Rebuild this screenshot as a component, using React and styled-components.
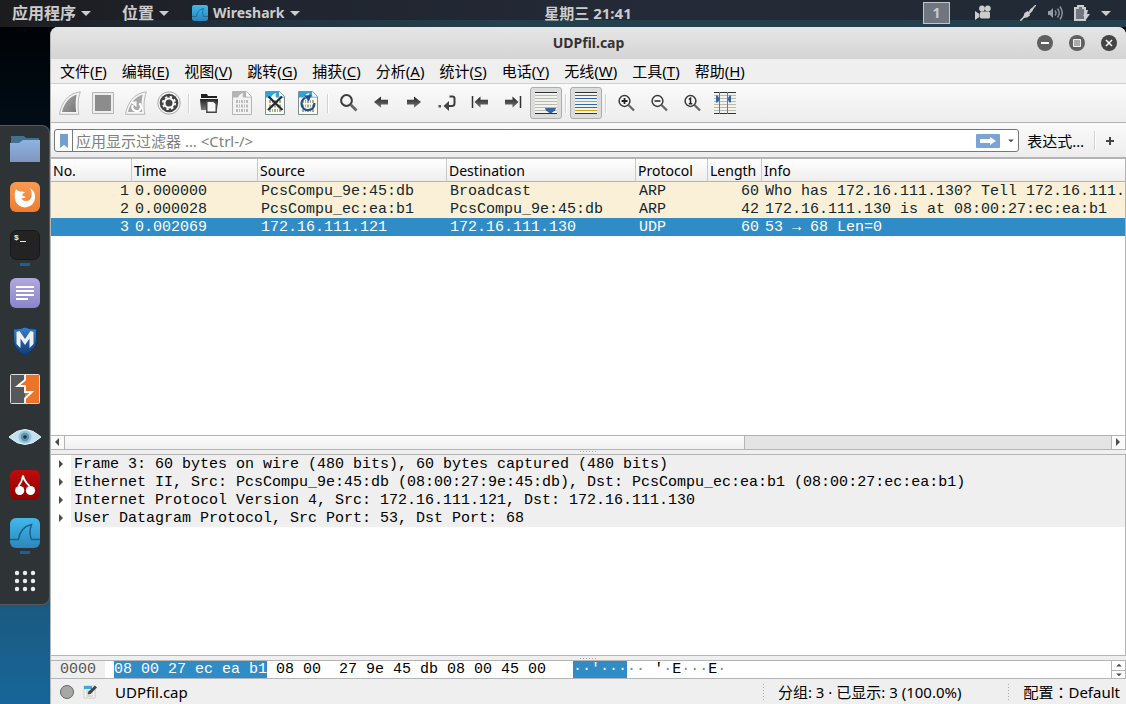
import React from 'react';
import styled, { createGlobalStyle } from 'styled-components';

const ui = '"Noto Sans", "Noto Sans CJK SC", sans-serif';
const mono = '"Liberation Mono", "Noto Sans CJK SC", monospace';
const line = '#b4b4b4';
const blue = '#308cc6';

const Global = createGlobalStyle`
  * { box-sizing: border-box; }
  html, body { margin: 0; height: 100%; }
  body { font: 14px/20px ${ui}; color: #000; overflow: hidden; }
  button { font: inherit; color: inherit; background: none; border: 0; padding: 0; }
  svg { display: block; flex: none; }
`;

const Desktop = styled.div`
  height: 100vh;
  display: flex;
  flex-direction: column;
  background: linear-gradient(#000 0, #010d17 18%, #0a3550 60%, #1a5b82 87%, #17669a 100%);
`;

/* ---------- top panel ---------- */
const Panel = styled.header`
  height: 27px;
  flex: none;
  display: grid;
  grid-template-columns: 50px minmax(0, 1fr) auto minmax(0, 1fr);
  align-items: center;
  padding-bottom: 1px;
  color: #ccc;
  font-weight: 700;
  background:
    linear-gradient(90deg, transparent, #24404c 45%, #24404c) bottom / 100% 7px no-repeat,
    linear-gradient(90deg, #1c1c1f, #20252f 25%, #242a37 60%, #222a35);
`;
const PanelMenus = styled.nav`
  grid-column: 1 / 3;
  display: flex;
  padding-left: 12px;
  gap: 23px;
`;
const PanelMenu = styled.button`
  display: flex;
  align-items: center;
  gap: 5px;
  padding-right: ${(p) => (p.$wide ? 8 : 0)}px !important;
  font-size: ${(p) => (p.$latin ? 14 : 16)}px !important;
`;
const Clock = styled.time`
  white-space: nowrap;
  font-size: 15px;
`;
const Tray = styled.div`
  display: flex;
  align-items: center;
  justify-content: flex-end;
  gap: 11px;
  padding-right: 15px;
`;
const Workspace = styled.button`
  width: 27px;
  height: 22px;
  border: 1px solid #c3c6ca !important;
  background: #707680 !important;
  margin-right: 14px;
`;
const TrayButton = styled.button`
  margin-right: ${(p) => (p.$gap ? 18 : 0)}px;
`;

const Main = styled.div`
  flex: 1;
  min-height: 0;
  display: flex;
`;

/* ---------- dock ---------- */
const Dock = styled.nav`
  width: 50px;
  flex: none;
  padding-top: 98px;
`;
const DockBody = styled.div`
  width: 50px;
  display: flex;
  flex-direction: column;
  border: 1px solid #55585a;
  border-left: 0;
  border-radius: 0 8px 8px 0;
  background: #2e3436;
`;
const DockButton = styled.button`
  height: 48px;
  display: flex;
  flex-direction: column;
  align-items: center;
  justify-content: flex-start;
  padding-top: 8px !important;
  &::after {
    content: '';
    width: 10px;
    height: 3px;
    margin-top: 3px;
    background: ${(p) => (p.$running ? '#215d9c' : 'transparent')};
  }
  &:last-child { height: 46px; }
`;

/* ---------- window ---------- */
const Window = styled.main`
  flex: 1;
  min-width: 0;
  display: flex;
  flex-direction: column;
  border-radius: 8px 8px 0 0;
  overflow: hidden;
  background: #efefef;
  border-left: 1px solid ${line};
`;
const TitleBar = styled.div`
  height: 32px;
  flex: none;
  display: grid;
  grid-template-columns: 1fr auto 1fr;
  align-items: center;
  background: linear-gradient(#e6e6e6, #d4d4d4);
`;
const Title = styled.h1`
  grid-column: 2;
  margin: 0;
  font-size: 14px;
  color: #333;
`;
const WindowButtons = styled.div`
  display: flex;
  justify-content: flex-end;
  gap: 16px;
  padding-right: 9px;
`;
const MenuBar = styled.nav`
  height: 25px;
  flex: none;
  display: flex;
  gap: 1px;
  padding: 0 2px;
  border-bottom: 1px solid #d0d0d0;
`;
const MenuItem = styled.button`
  padding: 0 7px !important;
  font-size: 15px !important;
  white-space: nowrap;
  u { text-underline-offset: 2px; }
`;
const ToolBar = styled.div`
  height: 39px;
  flex: none;
  display: flex;
  align-items: center;
  gap: 1px;
  padding-left: 3px;
  border-bottom: 1px solid ${line};
  background: linear-gradient(#fafafa, #ededed);
`;
const ToolButton = styled.button`
  width: 32px;
  height: 32px;
  display: grid;
  place-items: center;
  border-radius: 3px;
  border: 1px solid ${(p) => (p.$on ? '#adadad' : 'transparent')} !important;
  background: ${(p) => (p.$on ? '#dcdcdc' : 'transparent')} !important;
`;
const Separator = styled.span`
  width: 6px;
  height: 19px;
  background: linear-gradient(90deg, transparent 2px, #d2d2d2 2px, #d2d2d2 3px, #fff 3px, #fff 4px, transparent 4px);
`;
const FilterBar = styled.form`
  height: 36px;
  flex: none;
  display: flex;
  align-items: center;
  padding: 1px 11px 0 3px;
  border-bottom: 2px solid ${line};
  background: linear-gradient(#fafafa, #ededed);
`;
const FilterBox = styled.div`
  flex: 1;
  height: 23px;
  display: flex;
  align-items: center;
  padding-right: 4px;
  border: 1px solid #777;
  border-radius: 3px;
  background: #fff;
`;
const Bookmark = styled.button`
  width: 18px;
  height: 21px;
  display: grid;
  place-items: center;
  border-right: 1px solid #777 !important;
`;
const FilterInput = styled.input`
  flex: 1;
  min-width: 0;
  height: 21px;
  border: 0;
  padding: 1px 3px 0;
  outline: 0;
  background: none;
  font: 15px/20px ${ui};
  &::placeholder { color: #808080; opacity: 1; }
`;
const Apply = styled.button`
  margin-right: 8px;
`;
const Expression = styled.button`
  margin: 0 8px;
  font-size: 15px !important;
`;
const Plus = styled.button`
  margin-left: 7px;
`;

/* ---------- packet list ---------- */
const PacketPane = styled.section`
  flex: 292 1 0;
  min-height: 0;
  display: flex;
  flex-direction: column;
  border-right: 1px solid ${line};
  border-bottom: 1px solid ${line};
  background: #fff;
`;
const PacketScroll = styled.div`
  flex: 1;
  min-height: 0;
  overflow: hidden;
`;
const PacketTable = styled.table`
  width: 100%;
  table-layout: fixed;
  border-collapse: separate;
  border-spacing: 0;
`;
const Col = styled.col`
  width: ${(p) => (p.$w ? `${p.$w}px` : 'auto')};
`;
const HeadCell = styled.th`
  height: 23px;
  padding: 2px 2px 0;
  font: 14px/20px ${ui};
  text-align: left;
  border-bottom: 1px solid ${line};
  border-right: 1px solid #c9c9c9;
  background: linear-gradient(#fff, #eee);
  &:last-child { border-right: 0; }
`;
const PacketRow = styled.tr`
  color: ${(p) => (p.$selected ? '#fff' : '#12272e')};
  background: ${(p) => (p.$selected ? blue : '#faf0d7')};
`;
const Cell = styled.td`
  height: 18px;
  padding: 1px 3px 0;
  font: 15px/17px ${mono};
  text-align: ${(p) => (p.$right ? 'right' : 'left')};
  white-space: nowrap;
  overflow: hidden;
`;
const ScrollBar = styled.div`
  height: 14px;
  flex: none;
  display: flex;
  border-top: 1px solid ${line};
  background: #e4e4e4;
`;
const ScrollArrow = styled.button`
  width: 14px;
  display: grid;
  place-items: center;
  background: #fafafa !important;
  border-left: ${(p) => (p.$end ? `1px solid ${line}` : '0')} !important;
  border-right: ${(p) => (p.$end ? '0' : `1px solid ${line}`)} !important;
`;
const Track = styled.div`
  flex: 1;
`;
const Thumb = styled.div`
  width: 65%;
  height: 100%;
  border-right: 1px solid ${line};
  background: linear-gradient(#fcfcfc, #f0f0f0);
`;
const Splitter = styled.div`
  height: 4px;
  flex: none;
  display: grid;
  place-items: center;
  &::after {
    content: '';
    width: 17px;
    height: 1px;
    background: repeating-linear-gradient(90deg, #aaa 0 1px, transparent 1px 3px);
  }
`;

/* ---------- details ---------- */
const DetailPane = styled.section`
  flex: 202 1 0;
  min-height: 0;
  overflow: hidden;
  border: 1px solid ${line};
  border-left: 0;
  background: #fff;
`;
const Tree = styled.ul`
  margin: 0;
  padding: 0;
  list-style: none;
`;
const TreeItem = styled.li`
  height: 18px;
  display: flex;
`;
const Expander = styled.button`
  width: 20px;
  display: grid;
  place-items: center;
`;
const TreeText = styled.span`
  flex: 1;
  padding: 1px 0 0 3px;
  font: 15px/17px ${mono};
  white-space: pre;
  background: #efefef;
`;

/* ---------- bytes ---------- */
const BytesPane = styled.section`
  height: 19px;
  flex: none;
  display: flex;
  border: 1px solid ${line};
  border-left: 0;
  background: #fff;
  font: 15px/18px ${mono};
  white-space: pre;
`;
const Offset = styled.span`
  width: 54px;
  padding-left: 9px;
  margin-right: 9px;
  color: #555;
  background: #efefef;
`;
const Bytes = styled.span`
  flex: 1;
  overflow: hidden;
`;
const Hit = styled.mark`
  display: inline-block;
  color: #fff;
  background: ${blue};
`;
const Faint = styled.span`
  color: #888;
`;
const Spin = styled.div`
  width: 14px;
  display: grid;
  grid-template-rows: 1fr 1fr;
  border-left: 1px solid ${line};
`;
const SpinButton = styled.button`
  display: grid;
  place-items: center;
  & + & { border-top: 1px solid ${line}; }
`;

/* ---------- status ---------- */
const StatusBar = styled.footer`
  height: 25px;
  flex: none;
  display: flex;
  align-items: center;
  padding: 1px 6px 0 9px;
  font-size: 15px;
  white-space: nowrap;
`;
const StatusButton = styled.button`
  margin-right: 9px;
`;
const FileName = styled.span`
  flex: 1;
  margin-left: 9px;
`;
const Grip = styled.span`
  width: 1px;
  height: 17px;
  margin-right: 14px;
  background: repeating-linear-gradient(#aaa 0 1px, transparent 1px 3px);
`;
const Counts = styled.span`
  margin-right: 47px;
`;
const Profile = styled.button`
  font: 15px/20px "Noto Sans", "Noto Sans CJK TC", sans-serif !important;
`;

/* ---------- drawings ---------- */
const Caret = () => (
  <svg width="10" height="5" viewBox="0 0 10 5"><path d="M0 0h10L5 5z" fill="#ccc" /></svg>
);
const Wire = ({ size }) => (
  <svg width={size} height={size} viewBox="0 0 30 30">
    <defs><linearGradient id={`w${size}`} x2="0" y2="1"><stop stopColor="#42b8ea" /><stop offset="1" stopColor="#2c86bd" /></linearGradient></defs>
    <rect width="30" height="30" rx={size > 20 ? 6 : 4} fill={`url(#w${size})`} />
    <path d="M0 21.500h8.500C9.500 14 13 8.500 21.500 6.500C19.500 12 19.500 17 21.500 21.500H30" fill="none" stroke="#176486" strokeWidth="1.500" />
  </svg>
);
const finPath = 'M1.500 23.300C3.500 12 9.500 2.500 22.300.8C19.800 8 19.500 16 20.800 23.300Z';
const finInner = 'M4 21C6 13 10.500 6 18.700 3.500C17.500 9 17.300 15 18.200 21Z';
const Fin = () => (
  <svg width="24" height="24" viewBox="0 0 24 24">
    <defs><linearGradient id="fin" x2="1" y2="1"><stop stopColor="#aaa" /><stop offset="1" stopColor="#777" /></linearGradient></defs>
    <path d={finPath} fill="#f6f6f6" stroke="#b5b5b5" />
    <path d={finInner} fill="url(#fin)" />
  </svg>
);
const Stop = () => (
  <svg width="24" height="24" viewBox="0 0 24 24">
    <path d="M1.500 1.500h21v21h-21z" fill="#eee" stroke="#b5b5b5" />
    <path d="M4 4h16v16H4z" fill="#8c8c8c" />
  </svg>
);
const Restart = () => (
  <svg width="24" height="24" viewBox="0 0 24 24">
    <path d={finPath} fill="#f6f6f6" stroke="#b5b5b5" />
    <path d={finInner} fill="#a8a8a8" />
    <path d="M15.300 12.500A4.300 4.300 0 1 1 8.800 14" fill="none" stroke="#fff" strokeWidth="2.300" />
    <path d="M6.500 11l6-.8v6z" fill="#fff" />
  </svg>
);
const Gear = () => (
  <svg width="24" height="24" viewBox="0 0 24 24">
    <circle cx="12" cy="12" r="11.200" fill="#f4f4f4" stroke="#a8a8a8" />
    <circle cx="12" cy="12" r="9.300" fill="#424242" />
    <circle cx="12" cy="12" r="6.200" fill="none" stroke="#fff" strokeWidth="1.700" strokeDasharray="2.435 2.435" />
    <circle cx="12" cy="12" r="4.500" fill="none" stroke="#fff" strokeWidth="2" />
  </svg>
);
const Open = () => (
  <svg width="24" height="24" viewBox="0 0 24 24">
    <defs><linearGradient id="op" x2="0" y2="1"><stop stopColor="#222" /><stop offset="1" stopColor="#777" /></linearGradient></defs>
    <path d="M4 3h6l1 2h9v2H4z" fill="#1f1f1f" />
    <path d="M3 8h18v4l-1 7H4z" fill="url(#op)" />
    <path d="M9.800 10.200h6.700l2.700 2.500v8.500H9.800z" fill="#f6f6f6" stroke="#444" strokeWidth="1.400" />
  </svg>
);
const Doc = ({ kind }) => {
  const off = kind === 'save';
  const head = off ? '#b4b4b4' : '#2ea3dc';
  return (
    <svg width="24" height="24" viewBox="0 0 24 24">
      <path d="M2.500.5h14l5 5v18h-19z" fill={off ? '#f3f3f3' : '#fcfceb'} stroke={off ? '#b4b4b4' : '#7c8c92'} />
      <path d="M3 1h13.200v4.600H21v.9h-8C12.500 4.500 12.500 3 13.500 2C10.500 2.500 9 4 8 6.500H3z" fill={head} />
      <path d="M16.500 1v4.500H21z" fill="#fff" />
      <path d="M6 10.500h12M6 15h12M6 19.500h12" stroke={off ? '#bbb' : '#a8a89a'} strokeWidth="3" strokeDasharray="2 1 1 1" />
      {kind === 'close' && <path d="M5.500 5.500l14 13.500M19 5.500L5 19" stroke="#202a30" strokeWidth="2.200" />}
      {kind === 'reload' && (
        <g>
          <path d="M9.500 6.800A6.400 6.400 0 1 0 18.300 12" fill="none" stroke="#204f94" strokeWidth="2.300" />
          <path d="M8 4.500L15.500 4L12.800 10.500z" fill="#204f94" />
        </g>
      )}
    </svg>
  );
};
const Lens = ({ mark, find }) => (
  <svg width="24" height="24" viewBox="0 0 24 24">
    <circle cx="10.500" cy={find ? 9.500 : 10} r="5.400" fill={find ? 'none' : '#f7f7f7'} stroke="#3b3b3b" strokeWidth={find ? 2 : 1.500} />
    <path d={find ? 'M14.500 13.500l6 6' : 'M14.500 14l5.500 5.500'} stroke="#666" strokeWidth={find ? 2.800 : 2.300} />
    {mark === 'in' && <path d="M7.500 10h6M10.500 7v6" stroke="#222" strokeWidth="1.800" />}
    {mark === 'out' && <path d="M7.500 10h6" stroke="#222" strokeWidth="1.500" />}
    {mark === 'one' && <path d="M8.800 8.500l1.700-1.200v5.200M8.800 12.700h3.500" fill="none" stroke="#222" strokeWidth="1.500" />}
  </svg>
);
const Arrow = ({ dir, bar }) => (
  <svg width="24" height="24" viewBox="0 0 24 24">
    <defs><linearGradient id="ar" x2="0" y2="1"><stop stopColor="#222" /><stop offset="1" stopColor="#777" /></linearGradient></defs>
    <g transform={dir === 'right' ? 'translate(24 0) scale(-1 1)' : undefined}>
      <path d={bar ? 'M6.500 11l6-5.500v3.300H20v4.600h-7.500v3.300z' : 'M5 11l7-5.500v3.300h7v4.600h-7v3.300z'} fill="url(#ar)" />
      {bar && <path d="M4.500 5v12" stroke="#333" strokeWidth="1.500" />}
    </g>
  </svg>
);
const Jump = () => (
  <svg width="24" height="24" viewBox="0 0 24 24">
    <path d="M14.500 5.500h3q2 0 2 2v5q0 2.500-3 2.500h-4" fill="none" stroke="#3d3d3d" strokeWidth="2" />
    <path d="M8.500 15l5.500-5v10z" fill="#444" />
    <path d="M3.500 14h2.500v2.500H3.500z" fill="#555" />
  </svg>
);
const Lines = ({ kind }) => {
  const colors = kind === 'color'
    ? ['#ef2929', '#3465a4', '#73d216', '#3465a4', '#75507b', '#d0a010']
    : ['#b8bab0', '#b8bab0', '#b8bab0', '#b8bab0', '#b8bab0', '#b8bab0'];
  return (
    <svg width="24" height="24" viewBox="0 0 24 24" shapeRendering="crispEdges">
      <path d="M1 1h22v22H1z" fill="#f2f2ee" />
      {colors.map((c, i) => <rect key={c + i} x="1" y={4 + i * 3} width="22" height="1" fill={c} />)}
      <path d="M1 1h22v1H1zM1 22h22v1H1z" fill="#2e3436" />
      {kind === 'scroll' && <path d="M11 17h11l-1 2.500L17.500 22h-2L12 19.500z" fill="#3465a4" shapeRendering="auto" />}
      {kind === 'columns' && (
        <g shapeRendering="auto">
          <path d="M6.500 1v22M14.500 1v22" stroke="#777" />
          <path d="M3 4.500h1.500L7 8l-2.500 3.500H3zM18 4.500h-1.500L14.500 8l2 3.500H18z" fill="#3465a4" />
        </g>
      )}
    </svg>
  );
};
const Tri = ({ dir }) => {
  const d = { left: 'M5 0v8L1 4z', right: 'M1 0v8l4-4z', up: 'M0 5l4-4 4 4z', down: 'M0 2l4 4 4-4z' }[dir];
  const small = dir === 'up' || dir === 'down';
  return <svg width={small ? 6 : 7} height={small ? 5 : 8} viewBox={small ? '0 0 8 7' : '0 0 7 8'}><path d={d} fill="#4c4c4c" /></svg>;
};
const winMarks = {
  min: <path d="M4 8h8" stroke="#fff" strokeWidth="2" />,
  max: <path d="M4.500 4.500h7v7h-7z" fill="#aaa" stroke="#eee" />,
  close: <path d="M5 5l6 6M11 5l-6 6" stroke="#fff" strokeWidth="1.500" />,
};
const WinIcon = ({ kind }) => (
  <svg width="16" height="16" viewBox="0 0 16 16">
    <circle cx="8" cy="8" r="8" fill={kind === 'close' ? '#454545' : '#606060'} />
    {winMarks[kind]}
  </svg>
);
const trayArt = {
  camera: <g fill="#ccc"><circle cx="7" cy="3.500" r="2.900" /><circle cx="12.800" cy="3.500" r="2.900" /><rect x="5" y="6.500" width="10" height="7" rx="1.500" /><path d="M0 6l4.500 3v3L0 15z" /></g>,
  pen: <g><path d="M0 16l5-5M10 6l6-6" stroke="#ccc" strokeWidth="1.500" /><path d="M3 13l1.500-5 3-2 1 1L11 3.500l3-1-1.500 3.500L9.500 9l.5 1.500-3 2z" fill="#ccc" /></g>,
  sound: <g stroke="#888e96" fill="none" strokeWidth="1.500"><path d="M1 6h2l3-3v10l-3-3H1z" fill="#999da4" stroke="none" /><path d="M8 5.500q2 2.500 0 5M10.500 3.500q3.500 4.500 0 9M13 1.500q4.500 6.500 0 13" /></g>,
  battery: <g><path d="M1 3h3V1h5v2h2v12H1z" fill="#717780" stroke="#ccc" strokeWidth="2" /><path d="M12 5l-3 6h3l-1 5 5-7h-3l1-4z" fill="#ccc" /></g>,
};
const TrayIcon = ({ kind }) => <svg width="16" height="16" viewBox="0 0 16 16">{trayArt[kind]}</svg>;

const dockArt = {
  files: (
    <g>
      <path d="M1 2h13l2 2h13v8H1z" fill="#41718f" />
      <path d="M0 9h9l4-3h17v22H0z" fill="url(#fl)" />
    </g>
  ),
  firefox: (
    <g>
      <rect width="30" height="30" rx="6" fill="url(#ff)" />
      <path d="M6 7C4.500 10 4.500 14 5 16.500A10 9.500 0 0 0 25 15.500C25.300 11 23.500 8 19.500 6C21.500 8.500 22 10.500 21.500 12.500C22 15 20.500 18.500 16.500 19C13.500 19.400 11.500 17.500 11.500 16C13 16.700 15 16 15.800 15C14 14.500 13 13.500 12 13C12.500 11.500 14 11 15 10.500C13.500 9.500 11.500 9.300 10.500 9.500C9 9 7.500 9 6 7z" fill="#fff" />
    </g>
  ),
  terminal: (
    <g>
      <rect x=".5" y=".5" width="29" height="29" rx="6" fill="#232323" stroke="#171717" />
      <text x="4" y="10" fill="#eee" fontFamily="Liberation Mono, monospace" fontWeight="700" fontSize="8">$</text>
      <path d="M10 11.500h6" stroke="#eee" />
    </g>
  ),
  notes: (
    <g>
      <rect width="30" height="30" rx="6" fill="url(#nt)" />
      <path d="M6 9h18M6 13h18M6 17h18M6 21h12" stroke="#fff" strokeWidth="2" />
    </g>
  ),
  metasploit: (
    <g>
      <path d="M15 1Q20 3.500 26.500 3V15Q25.500 24 15 29.500Q4.500 24 3.500 15V3Q10 3.500 15 1z" fill="url(#ms)" stroke="#0d3765" />
      <path d="M6.500 18V6l3-1 5.500 8 5.500-8 3 1v12l-4 4V12.500L15 19l-4.500-6.500V22z" fill="#edf1f6" />
    </g>
  ),
  burp: (
    <g>
      <path d="M1 1h28v28H1z" fill="#ed7328" />
      <path d="M1 1h14v5L7.500 12H15v17H1z" fill="#57585a" />
      <path d="M15 12v6h7l-7 6.500z" fill="#ed7328" />
      <path d="M15 1v5L7.500 12H15v6h7l-7 6.500V29" fill="none" stroke="#fff" strokeWidth="1.800" />
      <rect x=".5" y=".5" width="29" height="29" rx="1" fill="none" stroke="#ddd" />
    </g>
  ),
  eye: (
    <g>
      <path d="M-1 15Q15 0 31 15Q15 30 -1 15z" fill="#c3e2ee" stroke="#e4f3f8" />
      <circle cx="15" cy="15" r="6.500" fill="#93c4da" />
      <circle cx="15" cy="15" r="4.200" fill="#5f93ab" />
      <circle cx="15" cy="15" r="1.800" fill="#234" />
    </g>
  ),
  cherry: (
    <g>
      <rect width="30" height="30" rx="6" fill="url(#ch)" />
      <circle cx="9.700" cy="20.500" r="4.600" fill="#fff" /><circle cx="20.500" cy="20.500" r="4.600" fill="#fff" />
      <path d="M8.500 16Q12.500 11 13 5.500Q14 11 19.500 16" fill="none" stroke="#fff" strokeWidth="1.800" />
    </g>
  ),
  apps: (
    <g fill="#eee">
      {[7, 15, 23].map((y) => [7, 15, 23].map((x) => <circle key={`${x}-${y}`} cx={x} cy={y} r="2.200" />))}
    </g>
  ),
};
const DockIcon = ({ kind }) => (kind === 'wireshark' ? <Wire size={30} /> : (
  <svg width="30" height="30" viewBox="0 0 30 30" overflow="visible">
    <defs>
      <linearGradient id="fl" x2="0" y2="1"><stop stopColor="#8db4e0" /><stop offset="1" stopColor="#8095bf" /></linearGradient>
      <linearGradient id="ff" x2="0" y2="1"><stop stopColor="#f99b52" /><stop offset="1" stopColor="#f07b2e" /></linearGradient>
      <linearGradient id="nt" x2="0" y2="1"><stop stopColor="#b0a8e0" /><stop offset="1" stopColor="#8b84cc" /></linearGradient>
      <linearGradient id="ms" x2="0" y2="1"><stop stopColor="#3a80c4" /><stop offset="1" stopColor="#0d3c78" /></linearGradient>
      <linearGradient id="ch" x2="0" y2="1"><stop stopColor="#c00b0b" /><stop offset="1" stopColor="#8c0404" /></linearGradient>
    </defs>
    {dockArt[kind]}
  </svg>
));

/* ---------- data ---------- */
const dock = ['files', 'firefox', 'terminal', 'notes', 'metasploit', 'burp', 'eye', 'cherry', 'wireshark', 'apps'];
const running = ['terminal', 'wireshark'];
const menus = [['文件', 'F'], ['编辑', 'E'], ['视图', 'V'], ['跳转', 'G'], ['捕获', 'C'], ['分析', 'A'], ['统计', 'S'], ['电话', 'Y'], ['无线', 'W'], ['工具', 'T'], ['帮助', 'H']];
const tools = [
  ['Start', <Fin />], ['Stop', <Stop />], ['Restart', <Restart />], ['Options', <Gear />], null,
  ['Open', <Open />], ['Save', <Doc kind="save" />], ['Close', <Doc kind="close" />], ['Reload', <Doc kind="reload" />], null,
  ['Find', <Lens find />], ['Back', <Arrow dir="left" />], ['Forward', <Arrow dir="right" />], ['Go to', <Jump />],
  ['First', <Arrow dir="left" bar />], ['Last', <Arrow dir="right" bar />], ['Auto scroll', <Lines kind="scroll" />, true], null,
  ['Colorize', <Lines kind="color" />, true], null,
  ['Zoom in', <Lens mark="in" />], ['Zoom out', <Lens mark="out" />], ['Normal size', <Lens mark="one" />], ['Resize columns', <Lines kind="columns" />],
];
const columns = [['No.', 81], ['Time', 126], ['Source', 189], ['Destination', 189], ['Protocol', 72], ['Length', 54], ['Info', 0]];
const packets = [
  ['1', '0.000000', 'PcsCompu_9e:45:db', 'Broadcast', 'ARP', '60', 'Who has 172.16.111.130? Tell 172.16.111.121'],
  ['2', '0.000028', 'PcsCompu_ec:ea:b1', 'PcsCompu_9e:45:db', 'ARP', '42', '172.16.111.130 is at 08:00:27:ec:ea:b1'],
  ['3', '0.002069', '172.16.111.121', '172.16.111.130', 'UDP', '60', '53 → 68 Len=0'],
];
const details = [
  'Frame 3: 60 bytes on wire (480 bits), 60 bytes captured (480 bits)',
  'Ethernet II, Src: PcsCompu_9e:45:db (08:00:27:9e:45:db), Dst: PcsCompu_ec:ea:b1 (08:00:27:ec:ea:b1)',
  'Internet Protocol Version 4, Src: 172.16.111.121, Dst: 172.16.111.130',
  'User Datagram Protocol, Src Port: 53, Dst Port: 68',
];

export default function App() {
  return (
    <Desktop>
      <Global />
      <Panel>
        <PanelMenus>
          <PanelMenu $wide>应用程序<Caret /></PanelMenu>
          <PanelMenu>位置<Caret /></PanelMenu>
          <PanelMenu $latin><Wire size={16} />Wireshark<Caret /></PanelMenu>
        </PanelMenus>
        <Clock>星期三 21:41</Clock>
        <Tray>
          <Workspace>1</Workspace>
          <TrayButton $gap aria-label="Record"><TrayIcon kind="camera" /></TrayButton>
          <TrayButton aria-label="Input"><TrayIcon kind="pen" /></TrayButton>
          <TrayButton aria-label="Sound"><TrayIcon kind="sound" /></TrayButton>
          <TrayButton aria-label="Power"><TrayIcon kind="battery" /></TrayButton>
          <TrayButton aria-label="System menu"><Caret /></TrayButton>
        </Tray>
      </Panel>
      <Main>
        <Dock>
          <DockBody>
            {dock.map((k) => <DockButton key={k} aria-label={k} $running={running.includes(k)}><DockIcon kind={k} /></DockButton>)}
          </DockBody>
        </Dock>
        <Window>
          <TitleBar>
            <Title>UDPfil.cap</Title>
            <WindowButtons>
              {['min', 'max', 'close'].map((k) => <button key={k} aria-label={k}><WinIcon kind={k} /></button>)}
            </WindowButtons>
          </TitleBar>
          <MenuBar>
            {menus.map(([t, k]) => <MenuItem key={k}>{t}(<u>{k}</u>)</MenuItem>)}
          </MenuBar>
          <ToolBar>
            {tools.map((t, i) => (t ? <ToolButton key={i} aria-label={t[0]} $on={t[2]}>{t[1]}</ToolButton> : <Separator key={i} />))}
          </ToolBar>
          <FilterBar onSubmit={(e) => e.preventDefault()}>
            <FilterBox>
              <Bookmark type="button" aria-label="Bookmarks">
                <svg width="8" height="14" viewBox="0 0 8 14"><path d="M0 0h8v14l-4-3-4 3z" fill="#729fcf" /></svg>
              </Bookmark>
              <FilterInput aria-label="Display filter" placeholder="应用显示过滤器 … <Ctrl-/>" />
              <Apply aria-label="Apply">
                <svg width="24" height="14" viewBox="0 0 24 14"><rect width="24" height="14" rx="1" fill="#7ba3d3" /><path d="M4 5h10V3l6 4-6 4V9H4z" fill="#fff" /></svg>
              </Apply>
              <button type="button" aria-label="History"><Tri dir="down" /></button>
            </FilterBox>
            <Expression type="button">表达式…</Expression>
            <Separator />
            <Plus type="button" aria-label="Add filter">
              <svg width="10" height="10" viewBox="0 0 10 10"><path d="M1 5h8M5 1v8" stroke="#444" strokeWidth="2" /></svg>
            </Plus>
          </FilterBar>
          <PacketPane>
            <PacketScroll>
              <PacketTable>
                <colgroup>{columns.map(([n, w]) => <Col key={n} $w={w} />)}</colgroup>
                <thead><tr>{columns.map(([n]) => <HeadCell key={n}>{n}</HeadCell>)}</tr></thead>
                <tbody>
                  {packets.map((p, r) => (
                    <PacketRow key={r} $selected={r === 2}>
                      {p.map((c, i) => <Cell key={i} $right={i === 0 || i === 5}>{c}</Cell>)}
                    </PacketRow>
                  ))}
                </tbody>
              </PacketTable>
            </PacketScroll>
            <ScrollBar>
              <ScrollArrow aria-label="Scroll left"><Tri dir="left" /></ScrollArrow>
              <Track><Thumb /></Track>
              <ScrollArrow $end aria-label="Scroll right"><Tri dir="right" /></ScrollArrow>
            </ScrollBar>
          </PacketPane>
          <Splitter />
          <DetailPane>
            <Tree>
              {details.map((d) => (
                <TreeItem key={d}>
                  <Expander aria-label="Expand"><Tri dir="right" /></Expander>
                  <TreeText>{d}</TreeText>
                </TreeItem>
              ))}
            </Tree>
          </DetailPane>
          <Splitter />
          <BytesPane>
            <Offset>0000</Offset>
            <Bytes>
              <Hit>08 00 27 ec ea b1</Hit>{' 08 00  27 9e 45 db 08 00 45 00   '}<Hit>··'···</Hit>
              <Faint>··</Faint>{" '"}<Faint>·</Faint>E<Faint>···</Faint>E<Faint>·</Faint>
            </Bytes>
            <Spin>
              <SpinButton aria-label="Up"><Tri dir="up" /></SpinButton>
              <SpinButton aria-label="Down"><Tri dir="down" /></SpinButton>
            </Spin>
          </BytesPane>
          <StatusBar>
            <StatusButton aria-label="Expert info">
              <svg width="14" height="14" viewBox="0 0 14 14"><circle cx="7" cy="7" r="6.500" fill="#a5a9a2" stroke="#666" /></svg>
            </StatusButton>
            <StatusButton aria-label="Comments">
              <svg width="14" height="14" viewBox="0 0 14 14"><path d="M1 1h11v12H1z" fill="#f7f7ef" stroke="#ccc" /><path d="M1 1h8v3H1z" fill="#3ba7dc" /><path d="M3 6h5M3 8h7M3 11h7" stroke="#bbb" /><path d="M4.500 9.500l1-3L12 .5l2 2L7.500 9z" fill="#444" /></svg>
            </StatusButton>
            <FileName>UDPfil.cap</FileName>
            <Grip />
            <Counts>分组: 3 · 已显示: 3 (100.0%)</Counts>
            <Grip />
            <Profile>配置：Default</Profile>
          </StatusBar>
        </Window>
      </Main>
    </Desktop>
  );
}
